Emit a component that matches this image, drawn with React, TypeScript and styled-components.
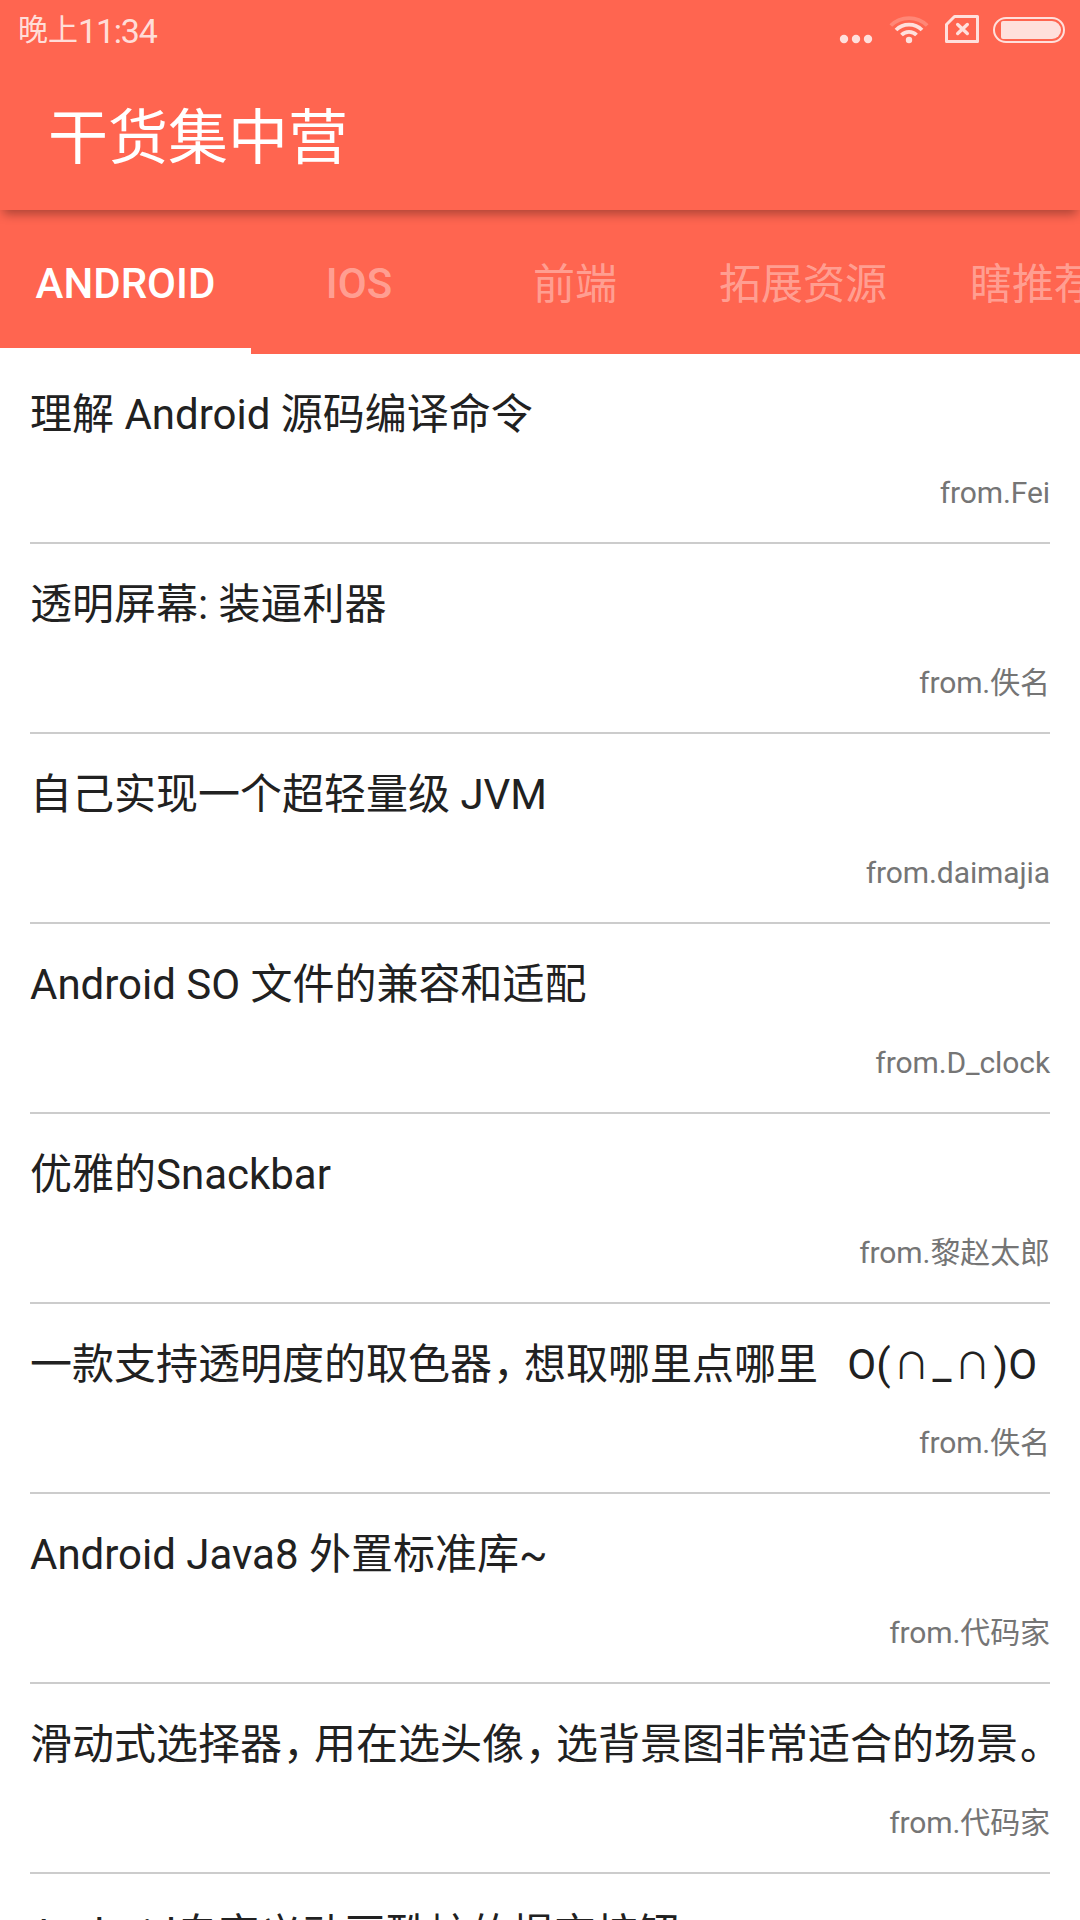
import React from "react";
import styled, { createGlobalStyle } from "styled-components";

const GlobalStyle = createGlobalStyle`
  * { box-sizing: border-box; }
  html, body { margin: 0; padding: 0; background: #fff; }
  body { font-family: Roboto, "Noto Sans CJK SC", sans-serif; overflow: hidden; }
`;

const Screen = styled.div`
  width: 1080px;
  height: 1920px;
  overflow: hidden;
  display: flex;
  flex-direction: column;
  background: #fff;
`;

const AppBar = styled.header`
  flex: none;
  height: 210px;
  display: flex;
  flex-direction: column;
  background: #ff6550;
  z-index: 1;
  box-shadow: 0 7px 10px -3px rgba(0, 0, 0, 0.33);
`;

const StatusBar = styled.div`
  height: 60px;
  display: flex;
  align-items: center;
  justify-content: space-between;
  padding: 0 14px 0 18px;
  color: rgba(255, 255, 255, 0.8);
`;

const Clock = styled.div`
  display: flex;
  align-items: center;
  font-size: 30px;
  line-height: 60px;
  white-space: nowrap;
`;

const ClockDigits = styled.span`
  padding-top: 2px;
  font-size: 34px;
  letter-spacing: -1.2px;
`;

const Toolbar = styled.div`
  height: 150px;
  padding: 4px 48px 0;
  color: #fff;
  font-size: 60px;
  line-height: 150px;
`;

const TabBar = styled.nav`
  flex: none;
  height: 144px;
  display: flex;
  background: #ff6550;
  overflow: hidden;
`;

const Tab = styled.div<{ $width: number; $active?: boolean }>`
  flex: none;
  width: ${(p) => p.$width}px;
  display: flex;
  align-items: center;
  justify-content: center;
  border-bottom: 6px solid ${(p) => (p.$active ? "#fff" : "transparent")};
  color: ${(p) => (p.$active ? "#fff" : "rgba(255, 255, 255, 0.4)")};
  font-size: 42px;
  white-space: nowrap;
`;

const TabLabel = styled.span<{ $latin?: boolean }>`
  padding-top: ${(p) => (p.$latin ? 8 : 2)}px;
  font-weight: ${(p) => (p.$latin ? 500 : 400)};
`;

const List = styled.ul`
  margin: 0;
  padding: 0 30px;
  list-style: none;
`;

const Item = styled.li`
  height: 190px;
  padding-top: 31px;
  border-bottom: 2px solid #ccc;
`;

const Title = styled.div`
  height: 60px;
  line-height: 60px;
  font-size: 42px;
  color: #212121;
  white-space: pre;
`;

const Comma = styled.span`
  margin-left: 1px;
  letter-spacing: -11px;
`;

const FullStop = styled.span`
  margin: 0 -2px 0 2px;
`;

const Face = styled.span`
  margin-left: -2px;
`;

const Eye = styled.span`
  margin: 0 3px;
  font-size: 36px;
  line-height: 1;
`;

const Source = styled.div`
  margin-top: 26px;
  height: 44px;
  line-height: 44px;
  font-size: 30px;
  letter-spacing: -0.1px;
  color: #757575;
  text-align: right;
`;

const tabs = [
  { label: "ANDROID", width: 251, latin: true },
  { label: "IOS", width: 216, latin: true },
  { label: "前端", width: 216 },
  { label: "拓展资源", width: 240 },
  { label: "瞎推荐", width: 220 },
];

const items = [
  { title: "理解 Android 源码编译命令", source: "Fei" },
  { title: "透明屏幕: 装逼利器", source: "佚名" },
  { title: "自己实现一个超轻量级 JVM", source: "daimajia" },
  { title: "Android SO 文件的兼容和适配", source: "D_clock" },
  { title: "优雅的Snackbar", source: "黎赵太郎" },
  { title: "一款支持透明度的取色器，想取哪里点哪里   O(∩_∩)O", source: "佚名" },
  { title: "Android Java8 外置标准库~", source: "代码家" },
  { title: "滑动式选择器，用在选头像，选背景图非常适合的场景。", source: "代码家" },
  { title: "Android自定义动画酷炫的提交按钮", source: "代码家" },
];

const StatusIcons = () => (
  <svg width="227" height="60" viewBox="839 0 227 60" fill="none">
    <g fill="#ffe0dc">
      <circle cx="844" cy="39" r="4.2" />
      <circle cx="856" cy="39" r="4.2" />
      <circle cx="868" cy="39" r="4.2" />
      <circle cx="909" cy="40" r="3.2" />
      <path d="M1003 21h49a9 9 0 0 1 0 18h-49a2 2 0 0 1-2-2v-14a2 2 0 0 1 2-2z" />
    </g>
    <g stroke="#ffe0dc" strokeWidth="3.8">
      <path d="M901.5 35a10.5 10.5 0 0 1 15 0" />
      <path d="M896 30a18.4 18.4 0 0 1 26 0" />
      <path d="M890.8 25.5a26 26 0 0 1 36.4 0" stroke="#ff8776" />
    </g>
    <g stroke="#ffe0dc">
      <path d="M954.500 16.500h23v25h-31v-17z" strokeWidth="3" strokeLinejoin="round" />
      <path d="M957.700 24.500l9.600 9m0-9l-9.600 9" strokeWidth="3.400" strokeLinecap="round" />
      <rect x="994" y="18" width="70" height="24" rx="12" strokeWidth="2" />
    </g>
  </svg>
);

const TitleText = ({ text }: { text: string }) => (
  <Title>
    {text.split(/(，|。|O\(.*\)O)/).map((part, i) => {
      if (part === "，") return <Comma key={i}>{part}</Comma>;
      if (part === "。") return <FullStop key={i}>{part}</FullStop>;
      if (part.startsWith("O("))
        return (
          <Face key={i}>
            {Array.from(part).map((c, j) => (c === "∩" ? <Eye key={j}>{c}</Eye> : c))}
          </Face>
        );
      return part;
    })}
  </Title>
);

export default function App() {
  return (
    <Screen lang="zh-CN">
      <GlobalStyle />
      <AppBar>
        <StatusBar>
          <Clock>
            <span>晚上</span>
            <ClockDigits>11:34</ClockDigits>
          </Clock>
          <StatusIcons />
        </StatusBar>
        <Toolbar>干货集中营</Toolbar>
      </AppBar>
      <TabBar>
        {tabs.map((t, i) => (
          <Tab key={t.label} $width={t.width} $active={i === 0}>
            <TabLabel $latin={t.latin}>{t.label}</TabLabel>
          </Tab>
        ))}
      </TabBar>
      <List>
        {items.map((it) => (
          <Item key={it.title}>
            <TitleText text={it.title} />
            <Source>from.{it.source}</Source>
          </Item>
        ))}
      </List>
    </Screen>
  );
}
